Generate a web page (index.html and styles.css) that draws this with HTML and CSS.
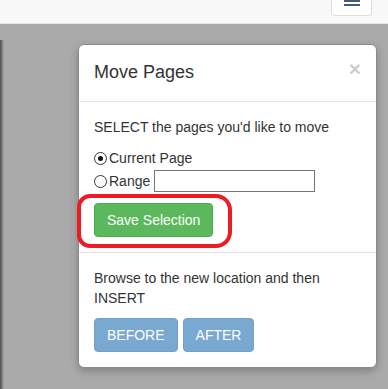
FILE: index.html
```html
<!DOCTYPE html>
<html lang="en">
<head>
    <meta charset="UTF-8">
    <title>Move Pages</title>
    <link rel="stylesheet" href="styles.css">
</head>
<body>
<!-- top bar -->
<div class="navbar">
    <button class="navbar-toggle" type="button">
        <span class="icon-bar"></span>
        <span class="icon-bar"></span>
    </button>
</div>

<div class="stage">
    <div class="page-edge"></div>

    <!-- Move Pages dialog -->
    <div class="modal">
        <div class="modal-header">
            <h4 class="modal-title">Move Pages</h4>
            <span class="close">&times;</span>
        </div>

        <div class="modal-section">
            <p>SELECT the pages you'd like to move</p>
            <label class="option">
                <input type="radio" name="scope" checked>
                <span>Current Page</span>
            </label>
            <label class="option">
                <input type="radio" name="scope">
                <span>Range</span>
                <input type="text" class="range-input">
            </label>
            <div class="btn-wrap">
                <button class="btn btn-success" type="button">Save Selection</button>
                <div class="highlight"></div>
            </div>
        </div>

        <div class="modal-section divided">
            <p>Browse to the new location and then INSERT</p>
            <div class="btn-row">
                <button class="btn btn-primary" type="button" disabled>BEFORE</button>
                <button class="btn btn-primary" type="button" disabled>AFTER</button>
            </div>
        </div>
    </div>
</div>
</body>
</html>
```

FILE: styles.css
```css
* {
    box-sizing: border-box;
    margin: 0;
    padding: 0;
}
body {
    font-family: 'Liberation Sans', Arial, sans-serif;
    font-size: 14px;
    line-height: 20px;
    color: #333;
    background-color: #aaaaaa;
    overflow: hidden;
}

/* Top bar */
.navbar {
    height: 24px;
    background-color: #f8f8f8;
    border-bottom: 1px solid #e7e7e7;
    display: flex;
    justify-content: flex-end;
    padding-right: 16px;
}
.navbar-toggle {
    width: 41px;
    height: 16px;
    background-color: #fff;
    border: 1px solid #ddd;
    border-top: none;
    border-radius: 0 0 4px 4px;
    display: flex;
    flex-direction: column;
    align-items: center;
    gap: 2px;
}
.icon-bar {
    display: block;
    width: 16px;
    height: 2px;
    background-color: #4a5877;
}

/* Backdrop area */
.stage {
    display: flex;
    align-items: flex-start;
}
.page-edge {
    width: 4px;
    height: 360px;
    margin-top: 16px;
    background: linear-gradient(to right, #4d4d4d, #7a7a7a 50%, #aaa);
}

/* Dialog */
.modal {
    width: 299px;
    margin: 20px 0 0 74px;
    background-color: #fff;
    border: 1px solid #8a8a8a;
    border-radius: 6px;
    box-shadow: 0 3px 9px rgba(0, 0, 0, 0.25);
}
.modal-header {
    display: flex;
    justify-content: space-between;
    align-items: flex-start;
    padding: 15px;
    border-bottom: 1px solid #e5e5e5;
}
.modal-title {
    font-size: 18px;
    font-weight: normal;
    line-height: 25.7px;
    color: #333;
}
.close {
    font-size: 21px;
    font-weight: bold;
    line-height: 1;
    color: #000;
    opacity: 0.2;
    margin-top: -2px;
}

.modal-section {
    padding: 15px;
}
.modal-section.divided {
    border-top: 1px solid #e5e5e5;
}
.modal-section p {
    margin-bottom: 10px;
}

/* Radio rows */
.option {
    display: flex;
    align-items: center;
    height: 23px;
}
.option input[type="radio"] {
    appearance: none;
    width: 13px;
    height: 13px;
    margin-right: 2px;
    border: 1px solid #333;
    border-radius: 50%;
    background-color: #fff;
    position: relative;
}
.option input[type="radio"]:checked::after {
    content: "";
    position: absolute;
    left: 3px;
    top: 3px;
    width: 5px;
    height: 5px;
    border-radius: 50%;
    background-color: #111;
}
.range-input {
    width: 161px;
    height: 22px;
    margin-left: 4px;
    border: 1px solid #767676;
    font: inherit;
}

/* Buttons */
.btn {
    display: inline-block;
    padding: 6px 12px;
    font-family: inherit;
    font-size: 14px;
    line-height: 20px;
    border: 1px solid transparent;
    border-radius: 4px;
    color: #fff;
}
.btn-success {
    background-color: #5cb85c;
    border-color: #4cae4c;
}
.btn-primary {
    background-color: #337ab7;
    border-color: #2e6da4;
}
.btn-primary:disabled {
    opacity: 0.65;
}
.btn-wrap {
    position: relative;
    display: inline-block;
    margin-top: 10px;
    vertical-align: top;
}
/* red annotation drawn round the save button */
.highlight {
    position: absolute;
    left: -17px;
    top: -9px;
    width: 155px;
    height: 54px;
    border: 4px solid #ed1c24;
    border-radius: 13px 16px 16px 13px;
}
.btn-row {
    display: flex;
    gap: 5px;
}
```
